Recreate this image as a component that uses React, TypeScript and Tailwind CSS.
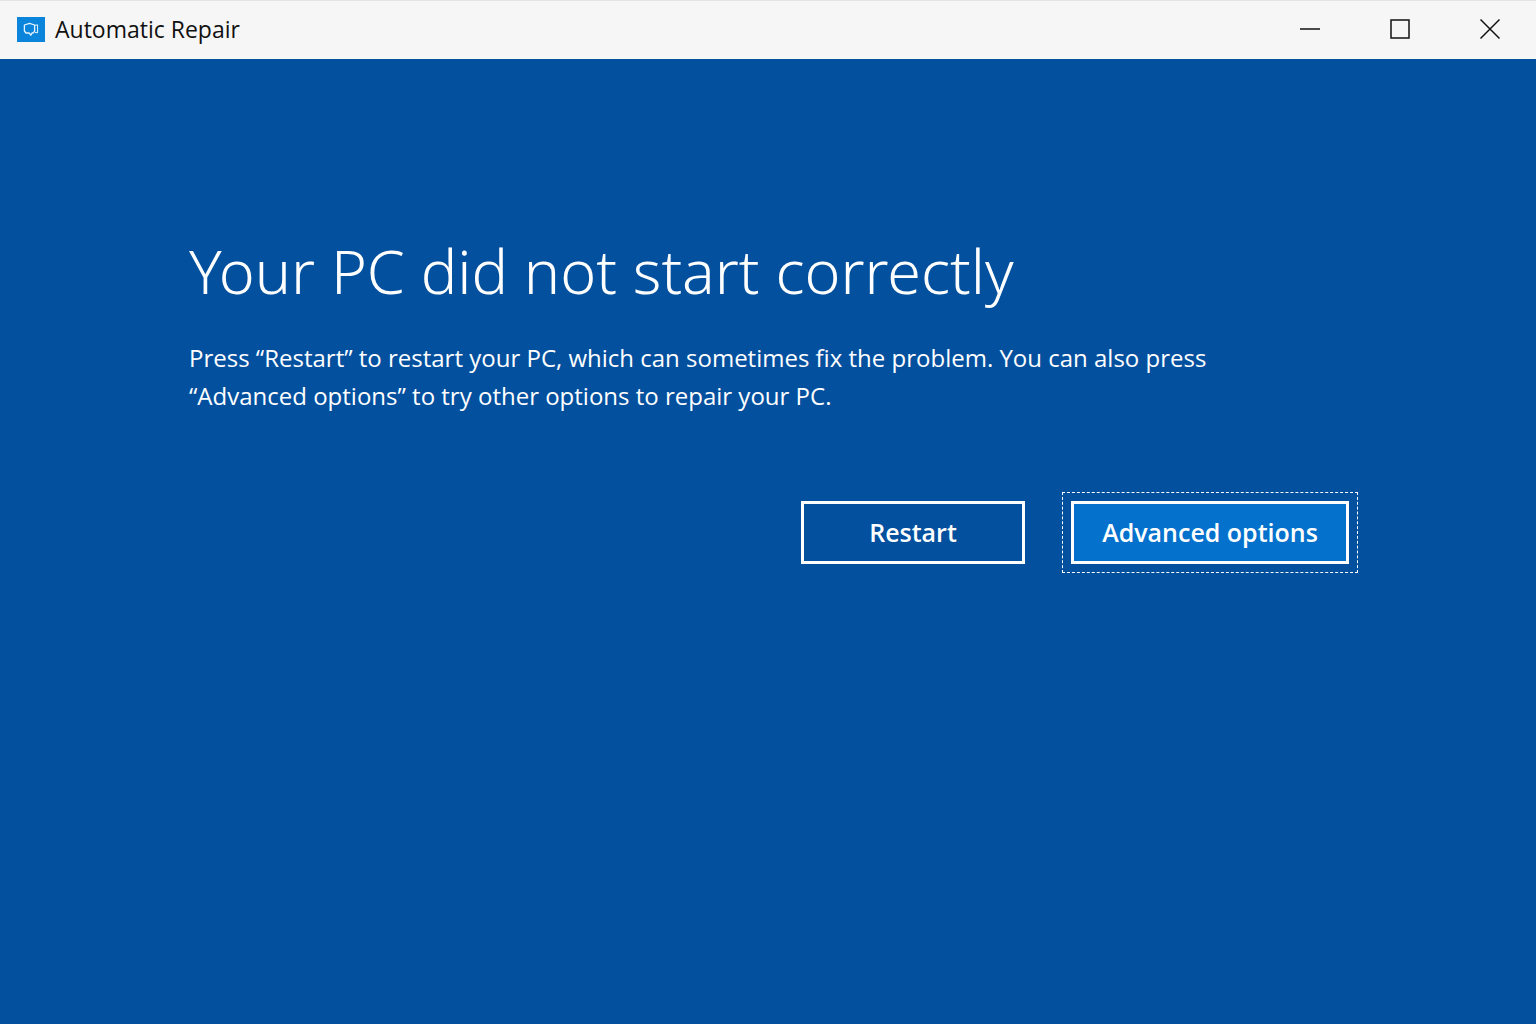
import { useState } from "react";

interface CaptionButtonProps {
  label: string;
  onClick?: () => void;
  children: React.ReactNode;
}

const CaptionButton: React.FC<CaptionButtonProps> = ({
  label,
  onClick,
  children,
}) => (
  <button
    type="button"
    aria-label={label}
    onClick={onClick}
    className="flex h-full w-[90px] items-center justify-center hover:bg-black/10"
  >
    <svg
      viewBox="0 0 22 22"
      className="h-[22px] w-[22px]"
      fill="none"
      stroke="#111111"
      strokeWidth="1.5"
    >
      {children}
    </svg>
  </button>
);

const RepairIcon = () => (
  <svg viewBox="0 0 28 25" className="h-[25px] w-7" aria-hidden="true">
    <rect width="28" height="25" fill="#0b84dc" />
    <g fill="none" stroke="#e6f5ff" strokeWidth="1.3" strokeLinejoin="round">
      <path d="M7.4 8 12.6 6.4 17.6 8V14.4L16 16H15L13.8 18.2 12.2 16H9L7.4 14Z" />
      <path d="M17.6 8.4 20.6 7.8V15.8L18 15.4" strokeWidth="1" />
    </g>
  </svg>
);

const App: React.FC = () => {
  const [selected, setSelected] = useState("advanced");

  return (
    <div className="flex min-h-screen flex-col bg-[#03509f] font-['Open_Sans','Noto_Sans',sans-serif] text-white">
      <header className="flex h-[59px] items-center justify-between border-t border-[#e4e4e4] bg-[#f6f6f6] pr-px pb-[2px] pl-[17px]">
        <div className="flex items-center gap-[10px]">
          <RepairIcon />
          <span className="text-[23px] leading-8 text-[#111111]">
            Automatic Repair
          </span>
        </div>
        <div className="flex h-full">
          <CaptionButton label="Minimize">
            <path d="M1 11H21" />
          </CaptionButton>
          <CaptionButton label="Maximize">
            <rect x="2" y="2" width="18" height="18" />
          </CaptionButton>
          <CaptionButton label="Close">
            <path d="M1.5 1.5 20.5 20.5M20.5 1.5 1.5 20.5" />
          </CaptionButton>
        </div>
      </header>

      <main className="flex-1 pt-[168px] pr-[187px] pl-[189px]">
        <h1 className="font-['Noto_Sans','Open_Sans',sans-serif] text-[61px] leading-[88px] font-light">
          Your PC did not start correctly
        </h1>
        <p className="mt-6 max-w-[1040px] text-2xl leading-[38px]">
          Press “Restart” to restart your PC, which can sometimes fix the
          problem. You can also press “Advanced options” to try other options
          to repair your PC.
        </p>
        <div className="mt-[86px] flex justify-end gap-[46px]">
          <button
            type="button"
            onClick={() => setSelected("restart")}
            className={`h-[63px] w-[224px] border-3 border-white text-[25px] font-semibold outline-offset-8 outline-white ${
              selected === "restart"
                ? "bg-[#0472cd] outline-1 outline-dashed"
                : "bg-[#03509f]"
            }`}
          >
            Restart
          </button>
          <button
            type="button"
            onClick={() => setSelected("advanced")}
            className={`h-[63px] w-[278px] border-3 border-white text-[25px] font-semibold outline-offset-8 outline-white ${
              selected === "advanced"
                ? "bg-[#0472cd] outline-1 outline-dashed"
                : "bg-[#03509f]"
            }`}
          >
            Advanced options
          </button>
        </div>
      </main>
    </div>
  );
};

export default App;
